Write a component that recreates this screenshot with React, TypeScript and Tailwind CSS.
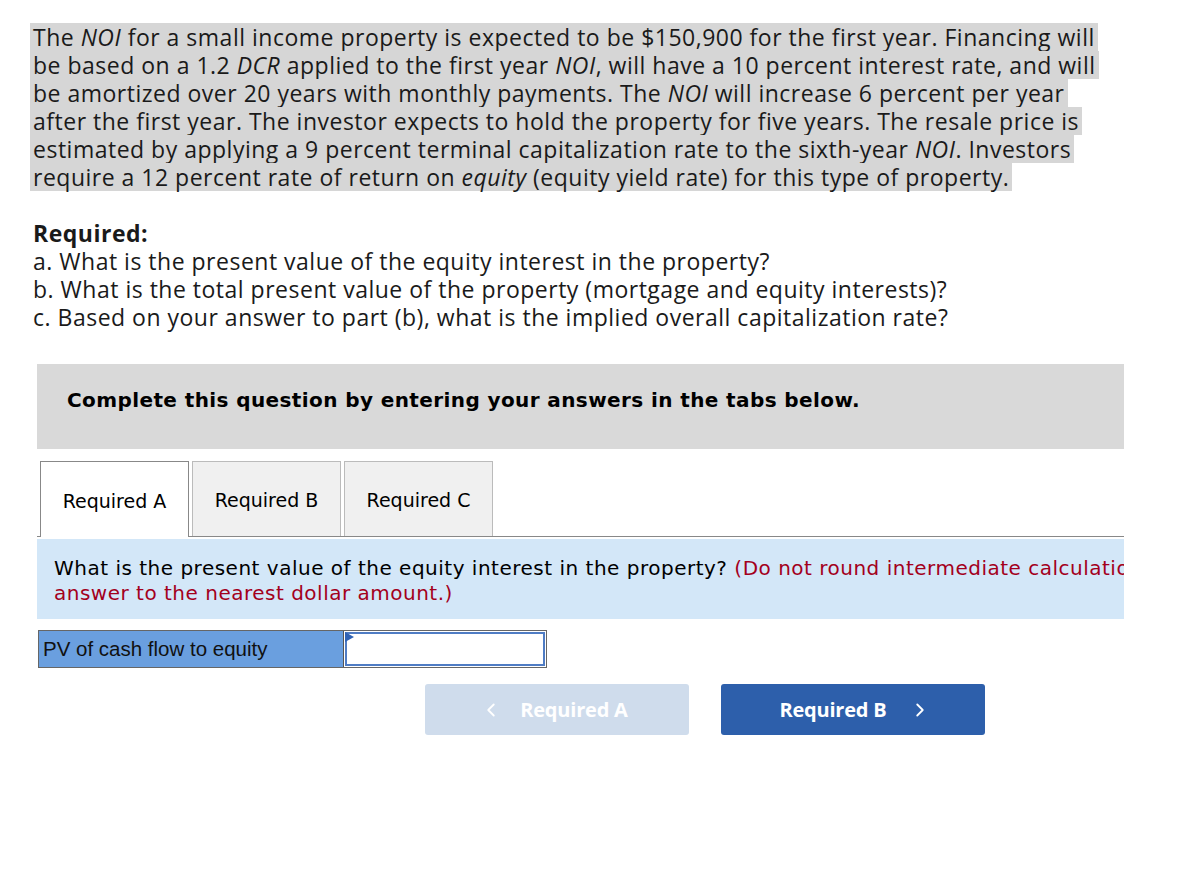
import { ChevronLeft, ChevronRight } from "lucide-react";

const prox = "font-['Open_Sans','Lato',sans-serif]";
const verd = "font-['DejaVu_Sans','Verdana',sans-serif]";

function Para() {
  const lines: React.ReactNode[] = [
    <>The <i>NOI</i> for a small income property is expected to be $150,900 for the first year. Financing will</>,
    <>be based on a 1.2 <i>DCR</i> applied to the first year <i>NOI</i>, will have a 10 percent interest rate, and will</>,
    <>be amortized over 20 years with monthly payments. The <i>NOI</i> will increase 6 percent per year</>,
    <>after the first year. The investor expects to hold the property for five years. The resale price is</>,
    <>estimated by applying a 9 percent terminal capitalization rate to the sixth-year <i>NOI</i>. Investors</>,
    <>require a 12 percent rate of return on <i>equity</i> (equity yield rate) for this type of property.</>,
  ];
  return (
    <div className="flex flex-col items-start">
      {lines.map((l, i) => (
        <span key={i} className="bg-[#d6d6d6] px-[3px] h-[28px] leading-[28px] whitespace-nowrap">
          {l}
        </span>
      ))}
    </div>
  );
}

export default function App() {
  return (
    <div className={`bg-white min-h-[876px] w-[1182px] pt-[23px] pl-[30px] text-[#1a1a1a] ${prox}`}>
      <div className="text-[23px] tracking-[0.5px]">
        <Para />
        <div className="pl-[3px] mt-[28px] leading-[28px]">
          <div className="font-bold">Required:</div>
          <div>a. What is the present value of the equity interest in the property?</div>
          <div>b. What is the total present value of the property (mortgage and equity interests)?</div>
          <div>c. Based on your answer to part (b), what is the implied overall capitalization rate?</div>
        </div>
      </div>

      <div className="ml-[7px] w-[1087px]">
        <div className={`mt-[33px] h-[85px] bg-[#d9d9d9] pl-[30px] pt-[24px] leading-[24px] ${verd} font-bold text-[20px] tracking-[0.4px] text-black`}>
          Complete this question by entering your answers in the tabs below.
        </div>

        <div className={`mt-[12px] flex items-end border-b border-[#888] pl-[3px] gap-[3px] ${verd} text-[19px] text-black`}>
          <div className="w-[149px] h-[76px] -mb-px pt-[3px] bg-white border border-b-0 border-[#888] flex items-center justify-center">
            Required A
          </div>
          <div className="w-[149px] h-[75px] pt-[3px] bg-[#f0f0f0] border border-b-0 border-[#bbb] flex items-center justify-center">
            Required B
          </div>
          <div className="w-[149px] h-[75px] pt-[3px] bg-[#f0f0f0] border border-b-0 border-[#bbb] flex items-center justify-center">
            Required C
          </div>
        </div>

        <div className="mt-[2px] h-[80px] bg-[#d3e7f8] overflow-hidden pl-[17px] pt-[17px]">
          <div className={`w-[1340px] ${verd} text-[20px] tracking-[0.5px] leading-[25px] text-black`}>
            What is the present value of the equity interest in the property?{" "}
            <span className="text-[#a3001c]">
              (Do not round intermediate calculations. Round your final answer to the nearest dollar amount.)
            </span>
          </div>
        </div>

        <div className="mt-[11px] ml-px w-[509px] h-[38px] border border-[#666] flex">
          <div className="w-[305px] bg-[#6a9fdf] border-r border-[#555] flex items-center pl-[4px] font-['Liberation_Sans',Arial,sans-serif] text-[20.5px] text-[#111]">
            PV of cash flow to equity
          </div>
          <div className="relative flex-1 p-px">
            <div className="h-full border-2 border-[#4f7cc4] bg-white" />
            <svg className="absolute left-px top-px" width="9" height="10" viewBox="0 0 9 10">
              <path d="M0 0 L9 5 L0 10 Z" fill="#2f62b5" />
            </svg>
          </div>
        </div>

        <div className="mt-[16px] ml-[388px] flex gap-[32px]">
          <button className="w-[264px] h-[51px] rounded-[3px] bg-[#cfdcec] text-white font-bold text-[20px] flex items-center justify-center gap-[18px]">
            <ChevronLeft size={22} strokeWidth={2} className="-ml-[6px]" />
            <span className="tracking-[-0.2px]">Required A</span>
          </button>
          <button className="w-[264px] h-[51px] rounded-[3px] bg-[#2d5fab] text-white font-bold text-[20px] flex items-center justify-center gap-[22px]">
            <span className="tracking-[-0.2px] ml-[4px]">Required B</span>
            <ChevronRight size={22} strokeWidth={2} />
          </button>
        </div>
      </div>
    </div>
  );
}
